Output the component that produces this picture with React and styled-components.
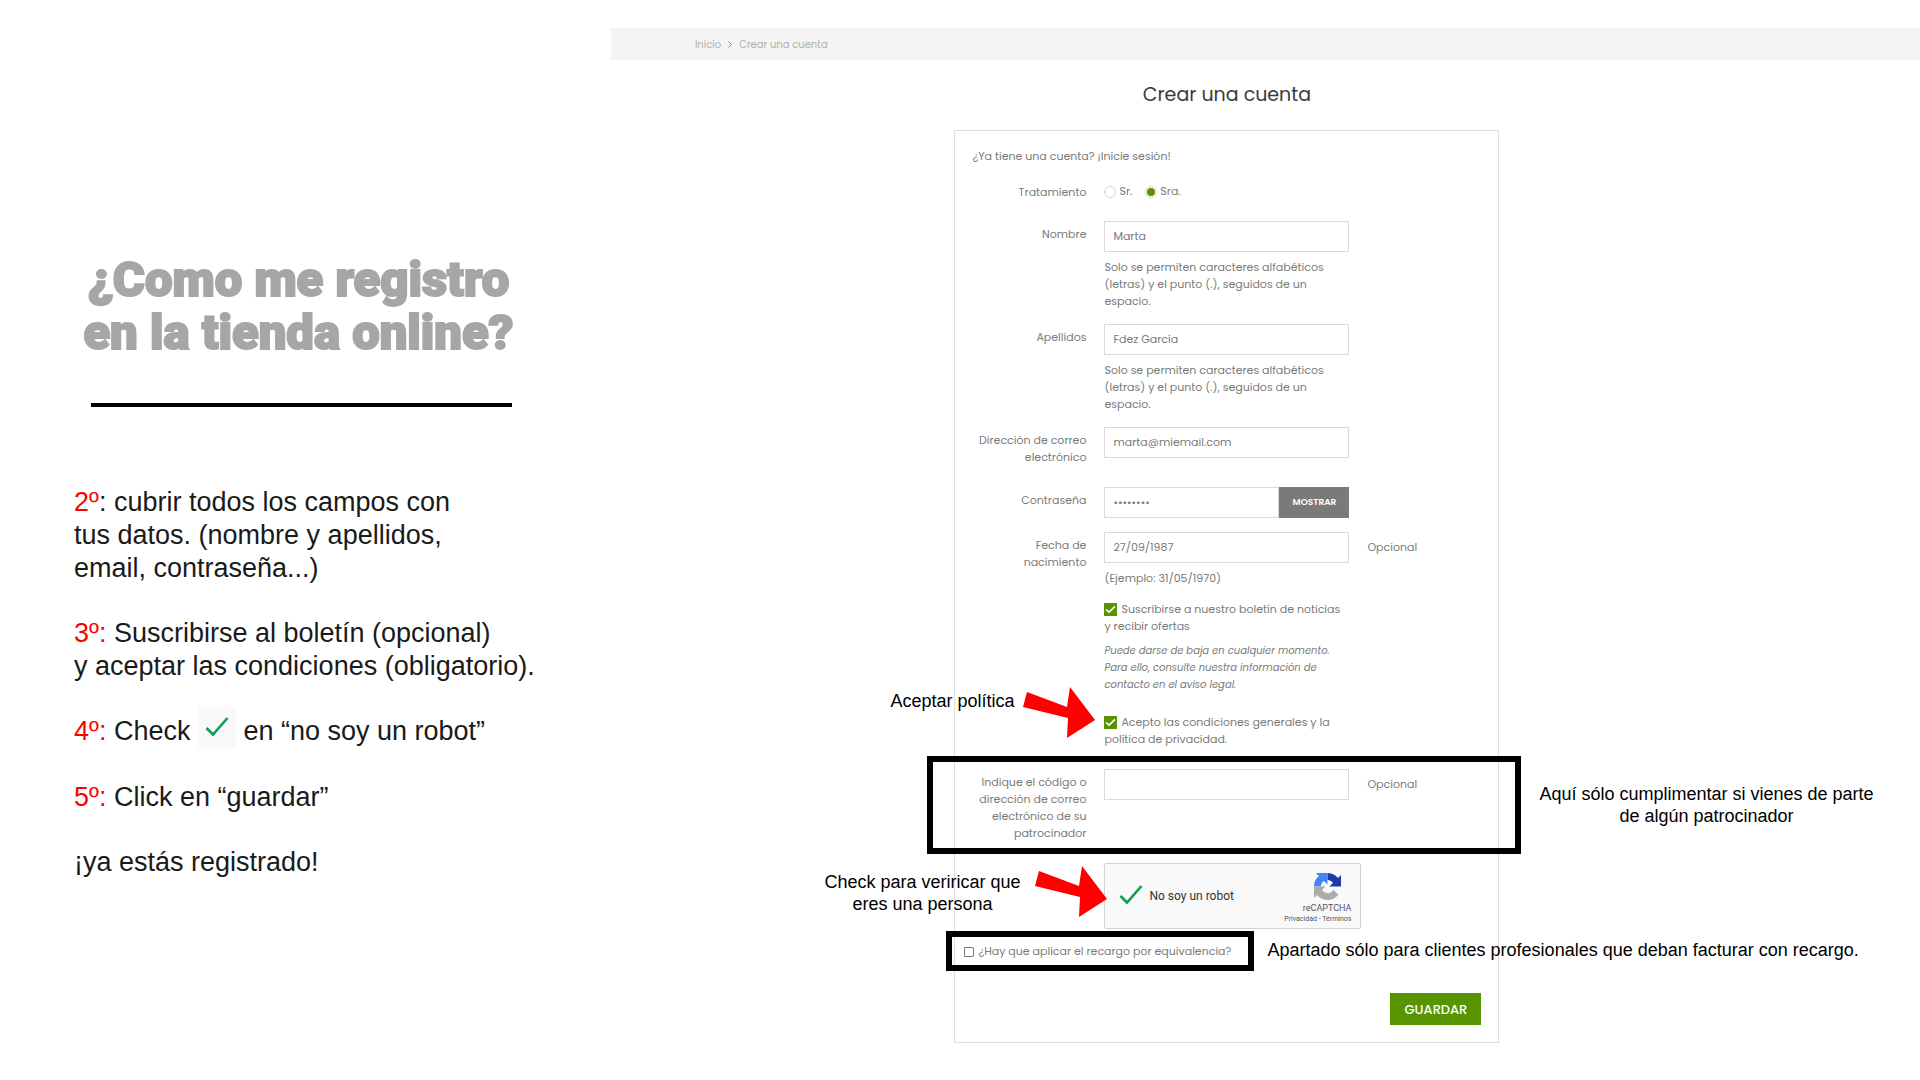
import React, { useState } from "react";
import styled, { createGlobalStyle, css } from "styled-components";

const Global = createGlobalStyle`
  *, *::before, *::after { box-sizing: border-box; }
  body { margin: 0; background: #fff; }
`;

const sans = `"Liberation Sans", Arial, sans-serif`;
const shop = `Poppins, Inter, sans-serif`;

const Page = styled.div`
  display: grid;
  grid-template-columns: 7fr 15fr;
  min-height: 100vh;
  overflow: hidden;
`;

const Guide = styled.aside`
  padding: 253px 0 0 74px;
  font-family: ${sans};
`;

const GuideTitle = styled.h1`
  margin: 0;
  width: 449px;
  color: #a6a6a6;
  font: 900 49px/53px Impact, Roboto, sans-serif;
  -webkit-text-stroke: 2px #a6a6a6;
  text-align: center;
  white-space: nowrap;
`;

const Rule = styled.hr`
  width: 421px;
  height: 4px;
  margin: 44px 0 79px 17px;
  border: 0;
  background: #000;
`;

const Steps = styled.div`
  display: flex;
  flex-direction: column;
  gap: 32px;
  color: #1a1a1a;
  font-size: 27px;
  line-height: 33px;
  white-space: nowrap;
`;

const Step = styled.p`
  margin: 0;
`;

const Red = styled.span`
  color: #f00;
`;

const TickTile = styled.span`
  display: inline-flex;
  align-items: center;
  justify-content: center;
  width: 38px;
  height: 41px;
  margin: -9px 0 1px;
  background: #f9f9f9;
  vertical-align: middle;
`;

const Shop = styled.main`
  padding-top: 28px;
  color: #7a7a7a;
  font: 400 11px/17px ${shop};
`;

const Crumbs = styled.nav`
  display: flex;
  align-items: center;
  gap: 7px;
  height: 32px;
  padding-left: 84px;
  background: #f4f4f4;
  color: #b0b0b0;
  font-size: 10px;
`;

const CrumbLink = styled.a`
  color: inherit;
  text-decoration: none;
`;

const Content = styled.div`
  display: flex;
  flex-direction: column;
  align-items: center;
  padding-right: 77px;
`;

const PageTitle = styled.h2`
  margin: 0;
  color: #3a3a3a;
  font-size: 19px;
  font-weight: 400;
  line-height: 70px;
`;

const Card = styled.form`
  display: flex;
  flex-direction: column;
  gap: 14px;
  width: 100%;
  max-width: 545px;
  padding: 17px;
  border: 1px solid #dedede;
`;

const Login = styled.p`
  margin: 0;
`;

const LoginLink = styled.a`
  color: inherit;
  text-decoration: none;
`;

const Row = styled.div`
  position: relative;
  display: grid;
  grid-template-columns: 114px 245px 1fr;
  column-gap: 18px;
  align-items: start;
  min-height: 28px;
  padding-bottom: ${(p) => (p.$loose ? 7 : 0)}px;
`;

const labelText = css`
  padding-top: 5px;
  text-align: right;
`;

const Label = styled.label`
  ${labelText}
`;

const GroupLabel = styled.span`
  ${labelText}
`;

const Field = styled.div`
  grid-column: 2;
  display: flex;
  flex-direction: column;
  gap: 7px;
`;

const Input = styled.input`
  width: 100%;
  min-width: 0;
  height: 31px;
  padding: 0 8px;
  border: 1px solid #dadada;
  border-radius: 0;
  background: #fff;
  color: #7a7a7a;
  font: inherit;
  outline: none;
`;

const InputGroup = styled.div`
  display: flex;
`;

const ShowButton = styled.button`
  flex: none;
  width: 70px;
  height: 31px;
  padding: 0;
  border: 0;
  background: #7a7a7a;
  color: #fff;
  font: 600 9px/17px ${shop};
`;

const Optional = styled.span`
  padding-top: 7px;
`;

const Radios = styled.div`
  display: flex;
  gap: 13px;
  padding-top: 4px;
`;

const RadioLabel = styled.label`
  display: flex;
  align-items: center;
  gap: 3px;
`;

const Radio = styled.input`
  appearance: none;
  display: grid;
  place-items: center;
  width: 12px;
  height: 12px;
  margin: 0;
  border: 1px solid #d4d4d4;
  border-radius: 50%;
  background: #fff;

  &:checked::before {
    content: "";
    width: 8px;
    height: 8px;
    border-radius: 50%;
    background: #589400;
  }
`;

const CheckWrap = styled.span`
  position: relative;
  display: inline-block;
  width: 13px;
  height: 13px;
  margin-right: 4px;
  vertical-align: middle;
`;

const GreenCheck = styled.input`
  appearance: none;
  display: block;
  width: 13px;
  height: 13px;
  margin: 0;
  background: #589400;
`;

const CheckMark = styled.svg`
  position: absolute;
  inset: 0;
  pointer-events: none;
`;

const Note = styled.em`
  display: block;
  font-size: 10px;
`;

const Captcha = styled.div`
  grid-column: 2 / 4;
  display: flex;
  align-items: center;
  justify-content: space-between;
  width: 257px;
  height: 66px;
  padding: 0 9px 0 14px;
  border: 1px solid #d3d3d3;
  border-radius: 2px;
  background: #f9f9f9;
`;

const CaptchaStatus = styled.div`
  display: flex;
  align-items: center;
  gap: 6px;
  color: #333;
  font: 12px/17px Roboto, sans-serif;
`;

const CaptchaBrand = styled.div`
  display: flex;
  flex-direction: column;
  align-items: flex-end;
  color: #555;
  font: 9px/11px Roboto, sans-serif;
`;

const CaptchaLogo = styled.svg`
  margin: 5px 10px 3px 0;
`;

const CaptchaLegal = styled.span`
  font-size: 7px;
`;

const Surcharge = styled.div`
  position: relative;
  margin-left: -8px;
`;

const SurchargeLabel = styled.label`
  display: flex;
  align-items: center;
  gap: 4px;
`;

const PlainCheck = styled.input`
  appearance: none;
  width: 10px;
  height: 10px;
  margin: 0;
  border: 1px solid #767676;
  border-radius: 1px;
  background: #fff;
`;

const Footer = styled.div`
  display: flex;
  justify-content: flex-end;
  padding-top: 19px;
`;

const SaveButton = styled.button`
  width: 91px;
  height: 32px;
  padding: 0;
  border: 0;
  background: #589400;
  color: #fff;
  font: 500 13px/17px ${shop};
`;

/* Marks drawn over the form by the tutorial */

const Frame = styled.div`
  position: absolute;
  inset: ${(p) => p.$inset};
  border: 6px solid #000;
  pointer-events: none;
`;

const Remark = styled.p`
  position: absolute;
  top: ${(p) => p.$top}px;
  left: ${(p) => p.$left}px;
  margin: 0;
  color: #000;
  font: 18px/22px ${sans};
  text-align: center;
  white-space: nowrap;
`;

const ArrowSvg = styled.svg`
  position: absolute;
  top: ${(p) => p.$top}px;
  left: ${(p) => p.$left}px;
`;

const Arrow = ({ top, left }) => (
  <ArrowSvg $top={top} $left={left} width="72" height="52" viewBox="0 0 72 52" aria-hidden="true">
    <path d="M4 5 44 20 47 0 72 33 44 51 45 31 0 20Z" fill="#f00" />
  </ArrowSvg>
);

const Tick = ({ size }) => (
  <svg width={size} height={size} viewBox="0 0 24 24" fill="none" aria-hidden="true">
    <path d="M1.5 12 8 18.500 22.500 2" stroke="#0f9d58" strokeWidth="2.6" />
  </svg>
);

const Check = ({ id }) => (
  <CheckWrap>
    <GreenCheck type="checkbox" id={id} defaultChecked />
    <CheckMark width="13" height="13" viewBox="0 0 13 13" fill="none" aria-hidden="true">
      <path d="M2 6.5 5 9.2 11 3.4" stroke="#fff" strokeWidth="1.6" />
    </CheckMark>
  </CheckWrap>
);

const nameHelp = "Solo se permiten caracteres alfabéticos (letras) y el punto (.), seguidos de un espacio.";

export default function App() {
  const [shown, setShown] = useState(false);

  return (
    <Page>
      <Global />
      <Guide>
        <GuideTitle>
          ¿Como me registro
          <br />
          en la tienda online?
        </GuideTitle>
        <Rule />
        <Steps>
          <Step>
            <Red>2º</Red>: cubrir todos los campos con
            <br />
            tus datos. (nombre y apellidos,
            <br />
            email, contraseña...)
          </Step>
          <Step>
            <Red>3º:</Red> Suscribirse al boletín (opcional)
            <br />y aceptar las condiciones (obligatorio).
          </Step>
          <Step>
            <Red>4º:</Red> Check{" "}
            <TickTile>
              <Tick size={24} />
            </TickTile>{" "}
            en “no soy un robot”
          </Step>
          <Step>
            <Red>5º:</Red> Click en “guardar”
          </Step>
          <Step>¡ya estás registrado!</Step>
        </Steps>
      </Guide>

      <Shop>
        <Crumbs>
          <CrumbLink href="#inicio">Inicio</CrumbLink>
          <svg width="4" height="7" viewBox="0 0 4 7" fill="none" aria-hidden="true">
            <path d="M.5.5 3.5 3.5.5 6.5" stroke="#888" />
          </svg>
          <CrumbLink href="#cuenta">Crear una cuenta</CrumbLink>
        </Crumbs>
        <Content>
          <PageTitle>Crear una cuenta</PageTitle>
          <Card onSubmit={(e) => e.preventDefault()}>
            <Login>
              ¿Ya tiene una cuenta? <LoginLink href="#sesion">¡Inicie sesión!</LoginLink>
            </Login>

            <Row role="radiogroup" aria-labelledby="tratamiento">
              <GroupLabel id="tratamiento">Tratamiento</GroupLabel>
              <Radios>
                <RadioLabel>
                  <Radio type="radio" name="tratamiento" />
                  Sr.
                </RadioLabel>
                <RadioLabel>
                  <Radio type="radio" name="tratamiento" defaultChecked />
                  Sra.
                </RadioLabel>
              </Radios>
            </Row>

            <Row>
              <Label htmlFor="nombre">Nombre</Label>
              <Field>
                <Input id="nombre" defaultValue="Marta" />
                <span>{nameHelp}</span>
              </Field>
            </Row>

            <Row>
              <Label htmlFor="apellidos">Apellidos</Label>
              <Field>
                <Input id="apellidos" defaultValue="Fdez García" />
                <span>{nameHelp}</span>
              </Field>
            </Row>

            <Row $loose>
              <Label htmlFor="correo">Dirección de correo electrónico</Label>
              <Field>
                <Input id="correo" type="email" defaultValue="marta@miemail.com" />
              </Field>
            </Row>

            <Row>
              <Label htmlFor="clave">Contraseña</Label>
              <InputGroup>
                <Input id="clave" type={shown ? "text" : "password"} defaultValue="12345678" />
                <ShowButton type="button" onClick={() => setShown(!shown)}>
                  MOSTRAR
                </ShowButton>
              </InputGroup>
            </Row>

            <Row>
              <Label htmlFor="fecha">
                Fecha de
                <br />
                nacimiento
              </Label>
              <Field>
                <Input id="fecha" defaultValue="27/09/1987" />
                <span>(Ejemplo: 31/05/1970)</span>
              </Field>
              <Optional>Opcional</Optional>
            </Row>

            <Row $loose>
              <Field>
                <label htmlFor="boletin">
                  <Check id="boletin" />
                  Suscribirse a nuestro boletín de noticias
                  <br />y recibir ofertas
                </label>
                <Note>
                  Puede darse de baja en cualquier momento. Para ello, consulte nuestra información
                  de contacto en el aviso legal.
                </Note>
              </Field>
            </Row>

            <Row $loose>
              <Field>
                <label htmlFor="condiciones">
                  <Check id="condiciones" />
                  Acepto las condiciones generales y la política de privacidad.
                </label>
              </Field>
              <Remark $top={-24} $left={-82}>
                Aceptar política
              </Remark>
              <Arrow top={-27} left={51} />
            </Row>

            <Row $loose>
              <Label htmlFor="patrocinador">
                Indique el código o dirección de correo electrónico de su patrocinador
              </Label>
              <Field>
                <Input id="patrocinador" />
              </Field>
              <Optional>Opcional</Optional>
              <Frame $inset="-13px -40px -5px -45px" />
              <Remark $top={14} $left={567}>
                Aquí sólo cumplimentar si vienes de parte
                <br />
                de algún patrocinador
              </Remark>
            </Row>

            <Row>
              <Captcha>
                <CaptchaStatus>
                  <Tick size={24} />
                  No soy un robot
                </CaptchaStatus>
                <CaptchaBrand>
                  <CaptchaLogo width="27" height="27" viewBox="0 0 64 64" aria-hidden="true">
                    <path d="M64 31.960c0-.46-.01-.92-.03-1.380V4.570l-7.190 7.190C50.890 4.560 41.940-.04 31.920-.04v16.340c.49 0 .86.06 1.140.16 4.990.39 9.310 3.150 11.860 7.140l-8.340 8.340z" fill="#1c3aa9" />
                    <path d="M31.860.04h-27.400l7.190 7.180A31.900 31.900 0 0 0-.13 32.080h16.330c0-.49.06-.86.16-1.140.39-4.990 3.150-9.310 7.140-11.860l8.340 8.340z" fill="#4285f4" />
                    <path d="M0 32.040c0 .46.01.92.03 1.380v26.010l7.190-7.190C13.110 59.440 22.060 64.040 32.080 64.040c10.430 0 19.700-4.980 25.550-12.700L45.840 39.430a15.600 15.600 0 0 1-4.780 5.360c-2.060 1.610-4.980 2.920-9 2.920-.49 0-.86-.06-1.140-.16-4.990-.39-9.310-3.150-11.860-7.140l8.340-8.340z" fill="#ababab" />
                  </CaptchaLogo>
                  <span>reCAPTCHA</span>
                  <CaptchaLegal>Privacidad - Términos</CaptchaLegal>
                </CaptchaBrand>
              </Captcha>
              <Remark $top={8} $left={-148}>
                Check para veriricar que
                <br />
                eres una persona
              </Remark>
              <Arrow top={3} left={63} />
            </Row>

            <Surcharge>
              <SurchargeLabel>
                <PlainCheck type="checkbox" />
                ¿Hay que aplicar el recargo por equivalencia?
              </SurchargeLabel>
              <Frame $inset="-12px 227px -11px -18px" />
              <Remark $top={-4} $left={303}>
                Apartado sólo para clientes profesionales que deban facturar con recargo.
              </Remark>
            </Surcharge>

            <Footer>
              <SaveButton type="submit">GUARDAR</SaveButton>
            </Footer>
          </Card>
        </Content>
      </Shop>
    </Page>
  );
}
